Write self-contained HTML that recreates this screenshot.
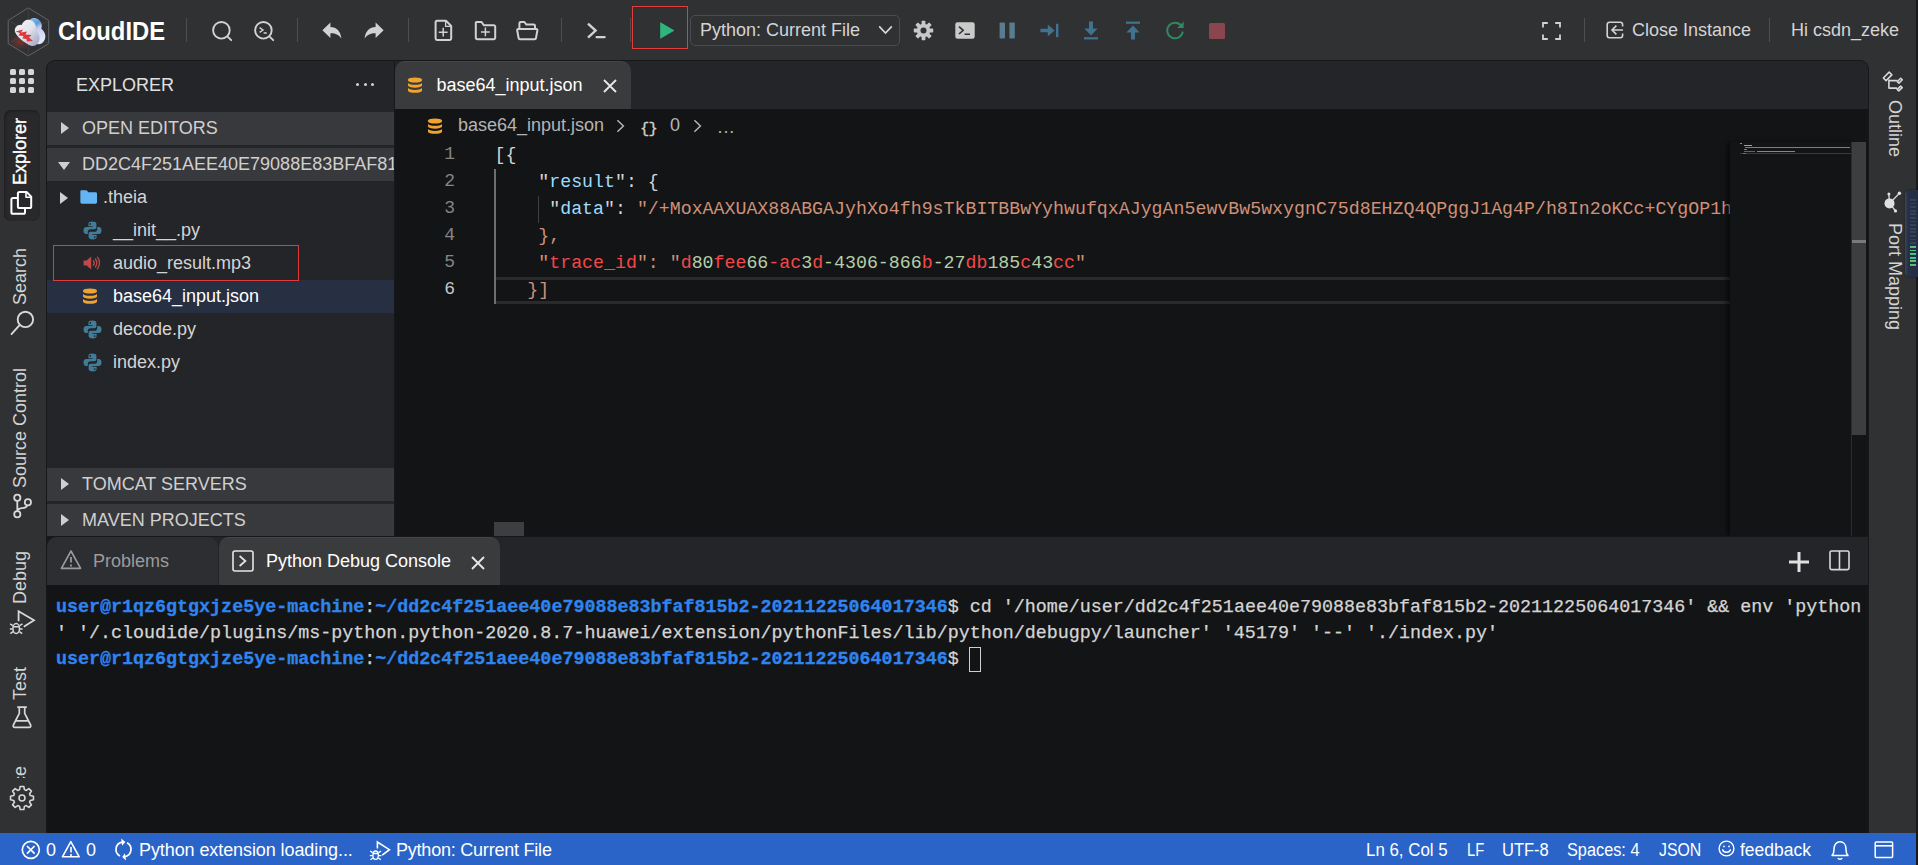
<!DOCTYPE html>
<html lang="en">
<head>
<meta charset="utf-8">
<title>CloudIDE</title>
<style>
*{box-sizing:border-box;margin:0;padding:0}
html,body{width:1918px;height:865px;overflow:hidden;background:#303133;font-family:"Liberation Sans",sans-serif;color:#d4d4d4}
.abs{position:absolute}
#app{position:absolute;left:0;top:0;width:1918px;height:865px;overflow:hidden;background:#303133}
/* top bar */
#top{position:absolute;left:0;top:0;width:1918px;height:60px;background:#303133}
.sep{position:absolute;top:18px;width:1px;height:24px;background:#4d4e51}
.brand{position:absolute;left:58px;top:15px;font-family:"Liberation Sans",sans-serif;font-weight:bold;font-size:26px;line-height:32px;color:#fff;transform:scaleX(0.915);transform-origin:0 0;white-space:nowrap}
.ttext{position:absolute;font-size:18px;line-height:22px;color:#d4d4d4;white-space:nowrap}
svg{position:absolute;overflow:visible}
/* main panel */
#main{position:absolute;left:46px;top:60px;width:1823px;height:773px;background:#242528;border-radius:9px 9px 0 0;border:1px solid #17181a;border-bottom:none;overflow:hidden}
/* everything inside main uses page coordinates via offset wrapper */
#mw{position:absolute;left:-47px;top:-61px;width:1918px;height:865px}
.band{position:absolute;left:47px;width:347px;height:33px;background:#38393c}
.band span{position:absolute;left:35px;top:5px;font-size:18px;line-height:22px;color:#d0d0d0;white-space:nowrap}
.tri-r{position:absolute;width:0;height:0;border-left:8px solid #cfcfcf;border-top:6.2px solid transparent;border-bottom:6.2px solid transparent}
.tri-d{position:absolute;width:0;height:0;border-top:8px solid #cfcfcf;border-left:6.2px solid transparent;border-right:6.2px solid transparent}
.row{position:absolute;left:47px;width:347px;height:33px}
.row span{position:absolute;left:66px;top:5px;font-size:18px;line-height:22px;color:#d4d4d4;white-space:nowrap}
.dot{position:absolute;top:0;width:3.4px;height:3.4px;border-radius:50%;background:#d0d0d0}
.band{overflow:hidden}
.code i{font-style:normal}
.code .k{color:#9cdcfe}
.code .q{color:#d4d4d4}
.code .s{color:#ce9178}
.code .r{color:#f44747}
.code .g{color:#b5cea8}
.gd{position:absolute;width:6px;height:6px;border-radius:1.6px;background:#d6d6d6}
.sx{transform-origin:0 0}
/* status */
#status{position:absolute;left:0;top:833px;width:1916px;height:32px;background:#2a64c8}
.st{position:absolute;top:6px;font-family:"Liberation Sans",sans-serif;font-size:18px;line-height:22px;color:#fff;white-space:nowrap}
.vt{position:absolute;font-size:18px;line-height:22px;color:#d4d4d4;white-space:nowrap;transform-origin:0 0}
.code{position:absolute;left:494.5px;font-family:"Liberation Mono",monospace;font-size:18.25px;line-height:27px;height:27px;white-space:pre;color:#d4d4d4}
.ln{position:absolute;left:395px;width:60px;text-align:right;font-family:"Liberation Mono",monospace;font-size:18px;line-height:27px;color:#858585}
.term{position:absolute;left:56px;font-family:"Liberation Mono",monospace;font-size:18.355px;line-height:26px;white-space:pre;color:#d4d4d4;-webkit-text-stroke:0.25px #d4d4d4}
.term b{color:#2f84ee;-webkit-text-stroke:0.3px #2f84ee}
</style>
</head>
<body>
<div id="app">
<div id="top">

  <!-- logo -->
  <svg style="left:6px;top:6px" width="46" height="52" viewBox="0 0 46 52">
    <defs>
      <linearGradient id="lg1" x1="0" y1="0" x2="1" y2="1"><stop offset="0" stop-color="#f6f6f9"/><stop offset="0.5" stop-color="#e2e2ea"/><stop offset="1" stop-color="#9aa0c4"/></linearGradient>
      <linearGradient id="lg2" x1="0" y1="0" x2="0.6" y2="1"><stop offset="0" stop-color="#b9d8f2"/><stop offset="0.45" stop-color="#5a9bd6"/><stop offset="0.6" stop-color="#c9cdf0"/><stop offset="1" stop-color="#dfe6f6"/></linearGradient>
      <radialGradient id="rg1" cx="0.5" cy="0.5" r="0.5"><stop offset="0" stop-color="#b8352c" stop-opacity="0.5"/><stop offset="1" stop-color="#b8352c" stop-opacity="0"/></radialGradient>
    </defs>
    <path d="M22.3 1.9 L42.7 14.4 L42.7 37.7 L22.3 49.9 L2.2 37.7 L2.2 14.4 Z" fill="none" stroke="#707175" stroke-width="0.8"/>
    <path d="M22.3 1.9 V26 M2.2 14.4 L22.3 26 L42.7 14.4 M2.2 37.7 L22.3 26 L42.7 37.7 M22.3 26 V49.9" fill="none" stroke="#48494d" stroke-width="0.6"/>
    <ellipse cx="14" cy="36" rx="11" ry="8" fill="url(#rg1)"/>
    <path transform="translate(5.8 -1.8)" d="M9 26 C8 21 12 18 16 19 C17 14 23 12 27 15.5 C30 18 30.5 21.5 29.5 24.5 C33.5 27.5 35 33 32 37 C30 40.5 26 40.5 23 39 C18 36 12 32 9 26 Z" fill="url(#lg2)"/>
    <path d="M9 26 C8 21 12 18 16 19 C17 14 23 12 27 15.5 C30 18 30.5 21.5 29.5 24.5 C33.5 27.5 35 33 32 37 C30 40.5 26 40.5 23 39 C18 36 12 32 9 26 Z" fill="url(#lg1)"/>
    <path d="M9.5 25.5 L17 23.5 L15 26.5 L21 25.5 L19.5 28.5 L25.5 29 L23 31.5 L27 35 L21 35.5 L20.5 33 L16.5 32.5 L17.5 30 L12.5 29.5 L14 27 Z" fill="#e0383a"/>
  </svg>
  <div class="brand">CloudIDE</div>
  <div class="sep" style="left:186px"></div>
  <!-- search -->
  <svg style="left:210px;top:19px" width="24" height="24" viewBox="0 0 24 24" fill="none" stroke="#d2d2d2" stroke-width="1.9" stroke-linecap="round"><circle cx="11.4" cy="11.3" r="8.3"/><path d="M17.6 17.6 L21.2 21.2"/></svg>
  <!-- search terminal -->
  <svg style="left:252px;top:19px" width="24" height="24" viewBox="0 0 24 24" fill="none" stroke="#d2d2d2" stroke-width="1.9" stroke-linecap="round"><circle cx="11.4" cy="11.3" r="8.3"/><path d="M17.6 17.6 L21.2 21.2"/><path d="M7.6 8.6 L11 11 L7.6 13.4 M11.6 14 L14.8 14" stroke-width="1.4" stroke-linecap="butt"/></svg>
  <div class="sep" style="left:297px"></div>
  <!-- undo -->
  <svg style="left:322px;top:22px" width="20" height="17" viewBox="0 0 20 17"><path d="M0.4 8.2 L8.4 0.4 L8.4 5 C14.5 5.2 18.6 9 19.4 16.6 C16.6 12.6 13.4 11.2 8.4 11.3 L8.4 16 Z" fill="#d2d2d2"/></svg>
  <!-- redo -->
  <svg style="left:364px;top:22px" width="20" height="17" viewBox="0 0 20 17"><path d="M19.6 8.2 L11.6 0.4 L11.6 5 C5.5 5.2 1.4 9 0.6 16.6 C3.4 12.6 6.6 11.2 11.6 11.3 L11.6 16 Z" fill="#d2d2d2"/></svg>
  <div class="sep" style="left:408px"></div>
  <!-- new file -->
  <svg style="left:434px;top:19px" width="19" height="23" viewBox="0 0 19 23" fill="none" stroke="#d2d2d2" stroke-width="2" stroke-linejoin="round" stroke-linecap="round"><path d="M3 1.8 H12 L17.2 7 V19.6 A1.4 1.4 0 0 1 15.8 21 H3 A1.4 1.4 0 0 1 1.6 19.6 V3.2 A1.4 1.4 0 0 1 3 1.8 Z"/><path d="M11.6 2.2 V7.4 H16.8" stroke-width="1.3"/><path d="M9.2 8.8 V17.6 M4.8 13.2 H13.6" stroke-width="1.5" stroke-linecap="butt"/></svg>
  <!-- new folder -->
  <svg style="left:474px;top:20px" width="23" height="21" viewBox="0 0 23 21" fill="none" stroke="#d2d2d2" stroke-width="2" stroke-linejoin="round"><path d="M2.4 2 H7.6 L9.8 5.2 H19.8 A1.4 1.4 0 0 1 21.2 6.6 V17.8 A1.4 1.4 0 0 1 19.8 19.2 H3.2 A1.4 1.4 0 0 1 1.8 17.8 V2.6 Z"/><path d="M11.4 7.6 V16.2 M7 12 H15.8" stroke-width="1.5"/></svg>
  <!-- open folder -->
  <svg style="left:516px;top:20px" width="23" height="21" viewBox="0 0 23 21" fill="none" stroke="#d2d2d2" stroke-width="2" stroke-linejoin="round"><path d="M3.4 9 V3.4 A1.4 1.4 0 0 1 4.8 2 H8.4 L10.4 4.6 H17.6 A1.4 1.4 0 0 1 19 6 V9"/><path d="M2.2 9 H20.4 A1 1 0 0 1 21.4 10.2 L20 18 A1.4 1.4 0 0 1 18.6 19.2 H4 A1.4 1.4 0 0 1 2.6 18 L1.2 10.2 A1 1 0 0 1 2.2 9 Z"/></svg>
  <div class="sep" style="left:561px"></div>
  <!-- terminal prompt -->
  <svg style="left:586px;top:22px" width="21" height="18" viewBox="0 0 21 18" fill="none" stroke="#d2d2d2" stroke-width="2.4"><path d="M2 1.6 L9.6 8.6 L2 15.6"/><path d="M10.6 15.2 H18.6" stroke-linecap="round" stroke-width="2.2"/></svg>
  <div class="sep" style="left:630px;width:1px"></div>
  <!-- run box -->
  <div class="abs" style="left:632px;top:6px;width:56px;height:43px;border:1.5px solid #e23b3b"></div>
  <svg style="left:659px;top:22px" width="16" height="17" viewBox="0 0 16 17"><path d="M1.6 0.8 L14.8 8.5 L1.6 16.2 Z" fill="#2eb67d" stroke="#2eb67d" stroke-width="0.8" stroke-linejoin="round"/></svg>
  <!-- select -->
  <div class="abs" style="left:690px;top:15px;width:210px;height:31px;border:1px solid #4b4c50;border-radius:5px"></div>
  <div class="ttext" style="left:700px;top:19px">Python: Current File</div>
  <svg style="left:878px;top:25px" width="15" height="10" viewBox="0 0 15 10" fill="none" stroke="#d8d8d8" stroke-width="1.7"><path d="M1.2 1.4 L7.5 8 L13.8 1.4"/></svg>
  <!-- gear -->
  <svg style="left:913px;top:20px" width="21" height="21" viewBox="0 0 21 21"><g fill="#c8c8c8"><circle cx="10.5" cy="10.5" r="6.7"/><g id="tth"><rect x="8.6" y="0.8" width="3.8" height="4.4" rx="0.6"/><rect x="8.6" y="15.8" width="3.8" height="4.4" rx="0.6"/></g><use href="#tth" transform="rotate(45 10.5 10.5)"/><use href="#tth" transform="rotate(90 10.5 10.5)"/><use href="#tth" transform="rotate(135 10.5 10.5)"/></g><circle cx="10.5" cy="10.5" r="3" fill="#303133"/></svg>
  <!-- debug console -->
  <svg style="left:955px;top:22px" width="20" height="17" viewBox="0 0 20 17"><rect x="0.3" y="0.3" width="19.4" height="16.4" rx="2.2" fill="#cacaca"/><path d="M4 4.6 L8.2 8.3 L4 12 M9.6 12.2 H15" fill="none" stroke="#303133" stroke-width="1.6"/></svg>
  <!-- pause -->
  <svg style="left:999px;top:22px" width="17" height="17" viewBox="0 0 17 17"><rect x="0.6" y="0.4" width="5.4" height="16.2" rx="0.8" fill="#5b7b8e"/><rect x="10.4" y="0.4" width="5.4" height="16.2" rx="0.8" fill="#5b7b8e"/></svg>
  <!-- step over -->
  <svg style="left:1040px;top:22px" width="19" height="17" viewBox="0 0 19 17"><path d="M0.4 6.8 H7.8 V2.4 L14.6 8.5 L7.8 14.6 V10.2 H0.4 Z" fill="#417290"/><rect x="16" y="1.8" width="2.4" height="13.4" fill="#417290"/></svg>
  <!-- step into -->
  <svg style="left:1083px;top:21px" width="16" height="19" viewBox="0 0 16 19"><path d="M6 0.6 H10 V7.4 H14.6 L8 14.4 L1.4 7.4 H6 Z" fill="#417290"/><rect x="1" y="16.2" width="14" height="2.2" fill="#417290"/></svg>
  <!-- step out -->
  <svg style="left:1125px;top:21px" width="16" height="19" viewBox="0 0 16 19"><rect x="1" y="0.6" width="14" height="2.2" fill="#417290"/><path d="M6 18.4 H10 V11.6 H14.6 L8 4.6 L1.4 11.6 H6 Z" fill="#417290"/></svg>
  <!-- restart -->
  <svg style="left:1165px;top:20px" width="20" height="20" viewBox="0 0 20 20" fill="none"><path d="M16.6 6.2 A7.8 7.8 0 1 0 17.8 11.6" stroke="#2f8a63" stroke-width="1.9"/><path d="M18.6 1.6 V8 H12.2 Z" fill="#2f8a63"/></svg>
  <!-- stop -->
  <div class="abs" style="left:1209px;top:22.5px;width:16px;height:16.5px;background:#89464f;border-radius:1.5px"></div>
  <!-- fullscreen -->
  <svg style="left:1542px;top:22px" width="19" height="18" viewBox="0 0 19 18" fill="none" stroke="#d2d2d2" stroke-width="1.8"><path d="M1 5.6 V1 H5.8 M13.2 1 H18 V5.6 M18 12.4 V17 H13.2 M5.8 17 H1 V12.4"/></svg>
  <div class="sep" style="left:1584px"></div>
  <!-- close instance icon -->
  <svg style="left:1606px;top:21px" width="18" height="18" viewBox="0 0 18 18" fill="none" stroke="#d2d2d2" stroke-width="1.6"><path d="M16.6 5.4 V3.4 A2.2 2.2 0 0 0 14.4 1.2 H3.4 A2.2 2.2 0 0 0 1.2 3.4 V14.6 A2.2 2.2 0 0 0 3.4 16.8 H14.4 A2.2 2.2 0 0 0 16.6 14.6 V12.6"/><path d="M17 9 H6.4 M10.4 4.6 L6 9 L10.4 13.4" stroke-linejoin="miter"/></svg>
  <div class="ttext" style="left:1632px;top:19px">Close Instance</div>
  <div class="sep" style="left:1769px"></div>
  <div class="ttext" style="left:1791px;top:19px">Hi csdn_zeke</div>
</div>
<div id="main"><div id="mw">


  <!-- editor -->
  <div class="abs" style="left:394px;top:61px;width:1px;height:476px;background:#17181a"></div>
  <div class="abs" style="left:395px;top:109px;width:1474px;height:428px;background:#131416"></div>
  <div class="abs" style="left:395px;top:61px;width:236px;height:48px;background:#3a3b3d;border-top:1px solid #444547;border-radius:10px 10px 0 0"></div>
  <svg style="left:407px;top:77px" width="16" height="17" viewBox="0 0 16 17"><g fill="#f0a32e"><path d="M1 2.6 A7 2.1 0 0 1 15 2.6 V3.4 A7 2.1 0 0 1 1 3.4 Z"/><path d="M1 5.7 A7 2.1 0 0 0 15 5.7 V8.6 A7 2.1 0 0 1 1 8.6 Z"/><path d="M1 10.8 A7 2.1 0 0 0 15 10.8 V13.7 A7 2.1 0 0 1 1 13.7 Z"/></g></svg>
  <div class="abs" style="left:436.5px;top:74px;font-size:18px;line-height:22px;color:#fff">base64_input.json</div>
  <svg style="left:603px;top:79px" width="14" height="14" viewBox="0 0 14 14" fill="none" stroke="#e6e6e6" stroke-width="1.9"><path d="M1 1 L13 13 M13 1 L1 13"/></svg>
  <!-- breadcrumbs -->
  <svg style="left:427px;top:118px" width="16" height="17" viewBox="0 0 16 17"><g fill="#f0a32e"><path d="M1 2.6 A7 2.1 0 0 1 15 2.6 V3.4 A7 2.1 0 0 1 1 3.4 Z"/><path d="M1 5.7 A7 2.1 0 0 0 15 5.7 V8.6 A7 2.1 0 0 1 1 8.6 Z"/><path d="M1 10.8 A7 2.1 0 0 0 15 10.8 V13.7 A7 2.1 0 0 1 1 13.7 Z"/></g></svg>
  <div class="abs" style="left:458px;top:114px;font-size:18px;line-height:22px;color:#b4b4b4;white-space:pre">base64_input.json</div>
  <svg style="left:616px;top:119px" width="9" height="14" viewBox="0 0 9 14" fill="none" stroke="#b4b4b4" stroke-width="1.5"><path d="M1.4 1.2 L7.4 7 L1.4 12.8"/></svg>
  <div class="abs" style="left:640px;top:118px;font-family:'Liberation Mono',monospace;font-size:15.5px;line-height:22px;color:#d0d0d0;letter-spacing:-0.8px;-webkit-text-stroke:0.35px #d0d0d0">{}</div>
  <div class="abs" style="left:670px;top:114px;font-size:18px;line-height:22px;color:#b4b4b4">0</div>
  <svg style="left:693px;top:119px" width="9" height="14" viewBox="0 0 9 14" fill="none" stroke="#b4b4b4" stroke-width="1.5"><path d="M1.4 1.2 L7.4 7 L1.4 12.8"/></svg>
  <div class="abs" style="left:717.5px;top:116px;font-size:18px;line-height:22px;color:#b4b4b4;letter-spacing:0.9px">...</div>
  <!-- code -->
  <div class="ln" style="top:141px">1</div><div class="ln" style="top:168px">2</div><div class="ln" style="top:195px">3</div><div class="ln" style="top:222px">4</div><div class="ln" style="top:249px">5</div><div class="ln" style="top:276px;color:#c6c6c6">6</div>
  <div class="abs" style="left:494px;top:169px;width:2px;height:135px;background:#6e6e6e"></div>
  <div class="abs" style="left:538px;top:196px;width:1px;height:27px;background:#404040"></div>
  <div class="abs" style="left:496px;top:277px;width:1234px;height:3px;background:#2a2a2c"></div>
  <div class="abs" style="left:496px;top:301px;width:1234px;height:3px;background:#2a2a2c"></div>
  <div class="code" style="top:142px">[{</div>
  <div class="code" style="top:169px">    <i class="q">"</i><i class="k">result</i><i class="q">"</i>: {</div>
  <div class="code" style="top:196px;width:1235px;overflow:hidden">     <i class="q">"</i><i class="k">data</i><i class="q">"</i>: <i class="s">"/+MoxAAXUAX88ABGAJyhXo4fh9sTkBITBBwYyhwufqxAJygAn5ewvBw5wxygnC75d8EHZQ4QPggJ1Ag4P/h8In2oKCc+CYgOP1hT8vwA5gQZjNgTJaDHAjcHAgP9uYAwYGAT4GHAACAF9zPw5eY</i></div>
  <div class="code" style="top:223px">    <i class="s">},</i></div>
  <div class="code" style="top:250px">    <i class="s">"</i><i class="r">trace_id</i><i class="s">": "</i><i class="r">d<i class="g">80</i>fee<i class="g">66</i>-ac<i class="g">3</i>d<i class="g">-4306-866</i>b<i class="g">-27</i>db<i class="g">185</i>c<i class="g">43</i>cc</i><i class="s">"</i></div>
  <div class="code" style="top:277px">   <i class="s">}]</i></div>
  <!-- minimap -->
  <div class="abs" style="left:1730px;top:142px;width:121px;height:395px;background:#131416;box-shadow:-4px 0 5px -1px rgba(0,0,0,0.55)"></div>
  <div class="abs" style="left:1740px;top:143px;width:2px;height:1px;background:#8a8a8a"></div>
  <div class="abs" style="left:1744px;top:145px;width:8px;height:1px;background:#7fa9c0"></div>
  <div class="abs" style="left:1745px;top:147px;width:105px;height:1.2px;background:#a8705a"></div>
  <div class="abs" style="left:1744px;top:149px;width:3px;height:1px;background:#a8705a"></div>
  <div class="abs" style="left:1744px;top:151px;width:11px;height:1px;background:#c03d3d"></div>
  <div class="abs" style="left:1757px;top:151px;width:38px;height:1px;background:#a37f6a"></div>
  <div class="abs" style="left:1740px;top:153px;width:111px;height:1px;background:#24405f"></div>
  <div class="abs" style="left:1743px;top:153px;width:3px;height:1px;background:#8a6a5a"></div>
  <!-- scrollbars -->
  <div class="abs" style="left:1851px;top:142px;width:1px;height:395px;background:#2b2c2e"></div>
  <div class="abs" style="left:1852px;top:142px;width:14px;height:293px;background:#3d3e40"></div>
  <div class="abs" style="left:1852px;top:240px;width:14px;height:3px;background:#7a7a7a"></div>
  <div class="abs" style="left:494px;top:522px;width:30px;height:14px;background:#3d3e40"></div>

  <!-- bottom panel -->
  <div class="abs" style="left:47px;top:536px;width:1822px;height:10px;background:#17181a"></div>
  <div class="abs" style="left:47px;top:537px;width:1822px;height:48px;background:#242528;border-radius:9px 0 0 0"></div>
  <div class="abs" style="left:47px;top:537px;width:171px;height:48px;background:#2d2e31;border-radius:10px 10px 0 0"></div>
  <div class="abs" style="left:47px;top:585px;width:1822px;height:248px;background:#131416"></div>
  <svg style="left:60px;top:549px" width="22" height="21" viewBox="0 0 22 21" fill="none" stroke="#9b9b9b" stroke-width="1.6" stroke-linejoin="round"><path d="M11 2 L20.6 19.4 H1.4 Z"/><path d="M11 8 V13.6 M11 15.4 V17.4" stroke-width="1.8"/></svg>
  <div class="abs" style="left:93px;top:550px;font-size:18px;line-height:22px;color:#9b9b9b">Problems</div>
  <div class="abs" style="left:219px;top:537px;width:281px;height:48px;background:#3a3b3d;border-top:1px solid #444547;border-radius:10px 10px 0 0"></div>
  <svg style="left:232px;top:550px" width="22" height="22" viewBox="0 0 22 22" fill="none" stroke="#e6e6e6" stroke-width="1.6"><rect x="1" y="1" width="20" height="20" rx="2"/><path d="M7.6 6 L13.4 11 L7.6 16" stroke-width="1.7"/></svg>
  <div class="abs" style="left:266px;top:550px;font-size:18px;line-height:22px;color:#fff">Python Debug Console</div>
  <svg style="left:471px;top:556px" width="14" height="14" viewBox="0 0 14 14" fill="none" stroke="#e6e6e6" stroke-width="1.9"><path d="M1 1 L13 13 M13 1 L1 13"/></svg>
  <svg style="left:1788px;top:551px" width="22" height="22" viewBox="0 0 22 22" fill="none" stroke="#e0e0e0" stroke-width="3"><path d="M11 1 V21 M1 11 H21"/></svg>
  <svg style="left:1829px;top:550px" width="21" height="21" viewBox="0 0 21 21" fill="none" stroke="#d8d8d8" stroke-width="1.6"><rect x="1" y="1" width="19" height="18.6" rx="1.6"/><path d="M10.5 1 V19.6"/></svg>
  <div class="term" style="top:595px"><b>user@r1qz6gtgxjze5ye-machine</b>:<b>~/dd2c4f251aee40e79088e83bfaf815b2-20211225064017346</b>$ cd '/home/user/dd2c4f251aee40e79088e83bfaf815b2-20211225064017346' &amp;&amp; env 'python</div>
  <div class="term" style="top:621px">' '/.cloudide/plugins/ms-python.python-2020.8.7-huawei/extension/pythonFiles/lib/python/debugpy/launcher' '45179' '--' './index.py'</div>
  <div class="term" style="top:647px"><b>user@r1qz6gtgxjze5ye-machine</b>:<b>~/dd2c4f251aee40e79088e83bfaf815b2-20211225064017346</b>$ </div>
  <div class="abs" style="left:969px;top:647px;width:12px;height:25px;border:1.5px solid #cfcfcf"></div>
  <!-- sidebar -->
  <div class="abs" style="left:76px;top:74px;font-size:18px;line-height:22px;color:#e0e0e0">EXPLORER</div>
  <div class="abs" style="left:355px;top:83px;width:20px;height:4px"><i class="dot" style="left:1px"></i><i class="dot" style="left:8.5px"></i><i class="dot" style="left:16px"></i></div>
  <div class="band" style="top:112px"><div class="tri-r" style="left:14px;top:10.4px"></div><span>OPEN EDITORS</span></div>
  <div class="band" style="top:148px"><div class="tri-d" style="left:11px;top:13.6px"></div><span>DD2C4F251AEE40E79088E83BFAF815B2</span></div>
  <div class="row" style="top:181px"><div class="tri-r" style="left:13px;top:10.6px"></div>
    <svg style="left:33px;top:9px" width="17.4" height="14" viewBox="0 0 19 16" preserveAspectRatio="none"><path d="M1.6 0.4 H6.6 C7.2 0.4 7.6 0.6 8 1.2 L9 2.6 H17 C17.9 2.6 18.6 3.3 18.6 4.2 V14 C18.6 14.9 17.9 15.6 17 15.6 H2 C1.1 15.6 0.4 14.9 0.4 14 V1.6 C0.4 0.9 0.9 0.4 1.6 0.4 Z" fill="#64b5f6"/></svg>
    <span style="left:56px">.theia</span></div>
  <div class="row" style="top:214px"><svg style="left:36px;top:7px" width="19" height="19" viewBox="0 0 19 19"><g fill="#3f7d9b"><path d="M9.3 0.6 C6.6 0.6 5.4 1.4 5.4 3 V5.2 H9.6 V6 H3.2 C1.4 6 0.5 7.4 0.5 9.5 C0.5 11.6 1.4 13 3.2 13 H4.8 V10.8 C4.8 9.2 6 8.2 7.6 8.2 H11.4 C12.6 8.2 13.4 7.4 13.4 6.2 V3 C13.4 1.4 11.8 0.6 9.3 0.6 Z"/><path d="M9.7 18.4 C12.4 18.4 13.6 17.6 13.6 16 V13.8 H9.4 V13 H15.8 C17.6 13 18.5 11.6 18.5 9.5 C18.5 7.4 17.6 6 15.8 6 H14.2 V8.2 C14.2 9.8 13 10.8 11.4 10.8 H7.6 C6.4 10.8 5.6 11.6 5.6 12.8 V16 C5.6 17.6 7.2 18.4 9.7 18.4 Z"/></g><circle cx="7.3" cy="2.9" r="0.85" fill="#242528"/><circle cx="11.7" cy="16.1" r="0.85" fill="#242528"/></svg><span>__init__.py</span></div>
  <div class="row" style="top:247px">
    <svg style="left:36px;top:8px" width="18" height="16" viewBox="0 0 18 16"><path d="M0.6 5.4 H3.6 L8.2 1.6 V14.4 L3.6 10.6 H0.6 Z" fill="#c0484a"/><g fill="none" stroke="#c0484a" stroke-width="1.3" stroke-linecap="round"><path d="M10.4 5.8 C11.4 7 11.4 9 10.4 10.2"/><path d="M12.4 4 C14.2 6.2 14.2 9.8 12.4 12"/><path d="M14.4 2.2 C17.2 5.6 17.2 10.4 14.4 13.8"/></g></svg>
    <span>audio_result.mp3</span></div>
  <div class="row" style="top:280px;background:#272f42"><svg style="left:35px;top:8px" width="16" height="17" viewBox="0 0 16 17"><g fill="#f0a32e"><path d="M1 2.6 A7 2.1 0 0 1 15 2.6 V3.4 A7 2.1 0 0 1 1 3.4 Z"/><path d="M1 5.7 A7 2.1 0 0 0 15 5.7 V8.6 A7 2.1 0 0 1 1 8.6 Z"/><path d="M1 10.8 A7 2.1 0 0 0 15 10.8 V13.7 A7 2.1 0 0 1 1 13.7 Z"/></g></svg><span style="color:#fff">base64_input.json</span></div>
  <div class="row" style="top:313px"><svg style="left:36px;top:7px" width="19" height="19" viewBox="0 0 19 19"><g fill="#3f7d9b"><path d="M9.3 0.6 C6.6 0.6 5.4 1.4 5.4 3 V5.2 H9.6 V6 H3.2 C1.4 6 0.5 7.4 0.5 9.5 C0.5 11.6 1.4 13 3.2 13 H4.8 V10.8 C4.8 9.2 6 8.2 7.6 8.2 H11.4 C12.6 8.2 13.4 7.4 13.4 6.2 V3 C13.4 1.4 11.8 0.6 9.3 0.6 Z"/><path d="M9.7 18.4 C12.4 18.4 13.6 17.6 13.6 16 V13.8 H9.4 V13 H15.8 C17.6 13 18.5 11.6 18.5 9.5 C18.5 7.4 17.6 6 15.8 6 H14.2 V8.2 C14.2 9.8 13 10.8 11.4 10.8 H7.6 C6.4 10.8 5.6 11.6 5.6 12.8 V16 C5.6 17.6 7.2 18.4 9.7 18.4 Z"/></g><circle cx="7.3" cy="2.9" r="0.85" fill="#242528"/><circle cx="11.7" cy="16.1" r="0.85" fill="#242528"/></svg><span>decode.py</span></div>
  <div class="row" style="top:346px"><svg style="left:36px;top:7px" width="19" height="19" viewBox="0 0 19 19"><g fill="#3f7d9b"><path d="M9.3 0.6 C6.6 0.6 5.4 1.4 5.4 3 V5.2 H9.6 V6 H3.2 C1.4 6 0.5 7.4 0.5 9.5 C0.5 11.6 1.4 13 3.2 13 H4.8 V10.8 C4.8 9.2 6 8.2 7.6 8.2 H11.4 C12.6 8.2 13.4 7.4 13.4 6.2 V3 C13.4 1.4 11.8 0.6 9.3 0.6 Z"/><path d="M9.7 18.4 C12.4 18.4 13.6 17.6 13.6 16 V13.8 H9.4 V13 H15.8 C17.6 13 18.5 11.6 18.5 9.5 C18.5 7.4 17.6 6 15.8 6 H14.2 V8.2 C14.2 9.8 13 10.8 11.4 10.8 H7.6 C6.4 10.8 5.6 11.6 5.6 12.8 V16 C5.6 17.6 7.2 18.4 9.7 18.4 Z"/></g><circle cx="7.3" cy="2.9" r="0.85" fill="#242528"/><circle cx="11.7" cy="16.1" r="0.85" fill="#242528"/></svg><span>index.py</span></div>
  <div class="abs" style="left:53px;top:245px;width:246px;height:36px;border:1.5px solid #e23b3b"></div>
  <div class="band" style="top:468px"><div class="tri-r" style="left:14px;top:10.4px"></div><span>TOMCAT SERVERS</span></div>
  <div class="band" style="top:504px;height:32px"><div class="tri-r" style="left:14px;top:10.4px"></div><span>MAVEN PROJECTS</span></div>
</div></div>

<!-- activity bar -->
<div id="act">
  <div class="abs" style="left:10px;top:69px;width:28px;height:27px">
    <i class="gd" style="left:0px;top:0px"></i><i class="gd" style="left:9px;top:0px"></i><i class="gd" style="left:18px;top:0px"></i>
    <i class="gd" style="left:0px;top:9px"></i><i class="gd" style="left:9px;top:9px"></i><i class="gd" style="left:18px;top:9px"></i>
    <i class="gd" style="left:0px;top:18px"></i><i class="gd" style="left:9px;top:18px"></i><i class="gd" style="left:18px;top:18px"></i>
  </div>
  <div class="abs" style="left:4px;top:110px;width:36px;height:111px;background:#29292b;border-radius:7px;box-shadow:inset 1px 1px 3px rgba(0,0,0,0.35)"></div>
  <div class="vt" style="left:9px;top:184.5px;transform:rotate(-90deg);color:#fff;-webkit-text-stroke:0.4px #fff">Explorer</div>
  <svg style="left:6px;top:186px" width="32" height="32" viewBox="6 186 32 32" fill="none" stroke="#fff" stroke-width="2" stroke-linejoin="round"><path d="M17 197.9 H13 A1.6 1.6 0 0 0 11.4 199.5 V212.2 A1.6 1.6 0 0 0 13 213.8 H23.4 A1.6 1.6 0 0 0 25 212.2 V209"/><path d="M19.5 192 H26.6 L31.2 196.6 V206.4 A1.6 1.6 0 0 1 29.6 208 H19.5 A1.6 1.6 0 0 1 17.9 206.4 V193.6 A1.6 1.6 0 0 1 19.5 192 Z"/><path d="M26 192.6 V197.2 H30.6" stroke-width="1.6"/></svg>
  <div class="vt" style="left:9px;top:305px;transform:rotate(-90deg)">Search</div>
  <svg style="left:9px;top:311px" width="25" height="25" viewBox="0 0 25 25" fill="none" stroke="#d8d8d8" stroke-width="1.9" stroke-linecap="round"><circle cx="16.4" cy="8.4" r="7.7"/><path d="M10.8 13.9 L2.5 23.1"/></svg>
  <div class="vt" style="left:9px;top:488px;transform:rotate(-90deg)">Source Control</div>
  <svg style="left:6px;top:490px" width="32" height="32" viewBox="6 490 32 32" fill="none" stroke="#d8d8d8" stroke-width="1.8"><circle cx="17.3" cy="497.7" r="3.1"/><circle cx="17.3" cy="514.2" r="3.1"/><circle cx="27.9" cy="502.2" r="3.1"/><path d="M17.3 500.8 V511.1 M27.2 505.3 C26.6 508 24.2 508 21.6 508.2 C19.4 508.4 18 509.2 17.4 510.8"/></svg>
  <div class="vt" style="left:9px;top:604px;transform:rotate(-90deg)">Debug</div>
  <svg style="left:6px;top:606px" width="32" height="32" viewBox="6 606 32 32" fill="none" stroke="#d8d8d8" stroke-width="1.8" stroke-linejoin="miter"><path d="M18.6 621.2 V611.3 L34 620.2 L23.8 626.8"/><g stroke-width="1.5"><ellipse cx="16.2" cy="628.6" rx="3.3" ry="5"/><path d="M13 626.7 H19.4 M12.8 625.6 L10.2 623.8 M19.6 625.6 L22.4 623.8 M12.6 628.9 H9.8 M19.8 628.9 H22.6 M13 631.6 L10.4 633.6 M19.4 631.6 L22.2 633.6"/></g></svg>
  <div class="vt" style="left:9px;top:700px;transform:rotate(-90deg)">Test</div>
  <svg style="left:10px;top:705px" width="24" height="24" viewBox="0 0 24 24" fill="none" stroke="#d8d8d8" stroke-width="1.7" stroke-linejoin="round"><path d="M7.2 2.1 H16.8 M9.3 2.1 V8.4 L3.4 20 C2.8 21.4 3.6 22.3 4.8 22.3 H19.2 C20.4 22.3 21.2 21.4 20.6 20 L14.7 8.4 V2.1 M6.2 15.9 H17.8"/></svg>
  <div class="abs" style="left:0;top:760px;width:46px;height:17.6px;overflow:hidden"><div class="vt" style="left:9px;top:94px;transform:rotate(-90deg)">Preference</div></div>
  <svg style="left:10px;top:786px" width="24" height="24" viewBox="0 0 26 26" fill="none" stroke="#d8d8d8" stroke-width="1.7" stroke-linejoin="round"><path d="M11 1.2 H15 L15.6 4.6 L17.6 5.5 L20.4 3.5 L23.2 6.3 L21.2 9.1 L22 11.1 L25.4 11.7 V15.7 L22 16.3 L21.2 18.3 L23.2 21.1 L20.4 23.9 L17.6 21.9 L15.6 22.8 L15 26.2 H11 L10.4 22.8 L8.4 21.9 L5.6 23.9 L2.8 21.1 L4.8 18.3 L4 16.3 L0.6 15.7 V11.7 L4 11.1 L4.8 9.1 L2.8 6.3 L5.6 3.5 L8.4 5.5 L10.4 4.6 Z" transform="translate(0 -0.7)"/><circle cx="13" cy="13" r="3.2"/></svg>
</div>
<!-- right bar -->
<div id="rbar">
  <svg style="left:1870px;top:62px" width="48" height="48" viewBox="0 0 48 48" fill="none" stroke="#d8d8d8" stroke-width="1.6" stroke-linejoin="round"><rect x="-4.1" y="-1.9" width="8.2" height="3.8" transform="translate(17.6 14.4) rotate(-45)"/><rect x="-2.4" y="-1.1" width="4.8" height="2.2" transform="translate(29.8 18.7) rotate(-45)"/><rect x="-2.4" y="-1.1" width="4.8" height="2.2" transform="translate(29.7 26.5) rotate(-45)"/><path d="M18.9 17.4 V26.1 H27 M18.9 18.6 H27.4"/></svg>
  <div class="vt" style="left:1906px;top:100px;transform:rotate(90deg)">Outline</div>
  <svg style="left:1862px;top:170px" width="56" height="56" viewBox="0 0 56 56" fill="none" stroke="#e0e0e0" stroke-width="1.3"><circle cx="27.5" cy="33.4" r="5" fill="#e0e0e0" stroke="none"/><path d="M27.3 33 L26.9 24.4 M29 32 L37.3 23.4 M29 35 L33.4 40.8"/><circle cx="26.9" cy="24" r="1.5" fill="#e0e0e0" stroke="none"/><circle cx="37.4" cy="23.2" r="1.7" fill="#e0e0e0" stroke="none"/><circle cx="33.5" cy="40.9" r="1.6" fill="#e0e0e0" stroke="none"/></svg>
  <div class="vt" style="left:1906px;top:223px;transform:rotate(90deg)">Port Mapping</div>
  <div class="abs" style="left:1916px;top:0;width:2px;height:865px;background:#18191b"></div>
  <!-- perf widget -->
  <div class="abs" style="left:1905px;top:189.5px;width:20px;height:87px;background:linear-gradient(to right,#3a4763 0,#262f44 3px,#232c40 100%);border-radius:5px;box-shadow:0 0 2px rgba(0,0,0,0.5)"></div>
  <div class="abs" style="left:1909.5px;top:198.6px;width:6px;height:46px;background:repeating-linear-gradient(to bottom,#35425c 0,#35425c 1.8px,transparent 1.8px,transparent 3.6px)"></div>
  <div class="abs" style="left:1909.5px;top:246.4px;width:6px;height:21.6px;background:repeating-linear-gradient(to bottom,#6fc07a 0,#2fc08a 1.9px,transparent 1.9px,transparent 3.6px)"></div>
</div>
<div id="status">
  <svg style="left:21px;top:6.5px" width="20" height="20" viewBox="0 0 20 20" fill="none" stroke="#fff" stroke-width="1.7"><circle cx="9.8" cy="9.8" r="8.5"/><path d="M6 6 L13.6 13.6 M13.6 6 L6 13.6"/></svg>
  <div class="st" style="left:46px">0</div>
  <svg style="left:61px;top:6.5px" width="20" height="19" viewBox="0 0 20 19" fill="none" stroke="#fff" stroke-width="1.6" stroke-linejoin="round"><path d="M9.8 1.6 L18.2 16.8 H1.4 Z"/><path d="M10 7 V12.4 M10 14 V16" stroke-width="1.6"/></svg>
  <div class="st" style="left:86px">0</div>
  <svg style="left:113px;top:5px" width="22" height="23" viewBox="113 838 22 23" fill="none" stroke="#fff" stroke-width="1.7"><path d="M119.98 856.02 A7.5 7.5 0 0 1 121.94 842.06 M127.02 842.78 A7.5 7.5 0 0 1 125.06 856.74"/><path d="M121.2 838.5 L125.4 842 L122 845.8 Z M122.2 857 L125 853.2 L126 860.4 Z" fill="#fff" stroke="none"/></svg>
  <div class="st" style="left:139px;letter-spacing:-0.09px">Python extension loading...</div>
  <svg style="left:366px;top:5px" width="26" height="26" viewBox="366 838 26 26" fill="none" stroke="#fff" stroke-width="1.6" stroke-linejoin="miter"><path d="M377.4 848.4 V842 L389.4 849.7 L382.2 855.2"/><g stroke-width="1.3"><ellipse cx="375.6" cy="855.2" rx="2.7" ry="4.2"/><path d="M372.9 853.5 H378.3 M372.6 852.6 L370.2 851 M378.6 852.6 L381 851 M372.6 855.6 H369.8 M378.6 855.6 H381.4 M372.9 858 L370.4 859.8 M378.3 858 L380.8 859.8"/></g></svg>
  <div class="st" style="left:396px;letter-spacing:-0.22px">Python: Current File</div>
  <div class="st sx" style="left:1366px;transform:scaleX(0.938)">Ln 6, Col 5</div>
  <div class="st sx" style="left:1467px;transform:scaleX(0.82)">LF</div>
  <div class="st sx" style="left:1502px;transform:scaleX(0.916)">UTF-8</div>
  <div class="st sx" style="left:1567px;transform:scaleX(0.905)">Spaces: 4</div>
  <div class="st sx" style="left:1658.5px;transform:scaleX(0.88)">JSON</div>
  <svg style="left:1718px;top:7px" width="17" height="17" viewBox="0 0 17 17" fill="none" stroke="#fff" stroke-width="1.4"><circle cx="8.5" cy="8.5" r="7.4"/><path d="M4.6 9.8 C5.6 13 11.4 13 12.4 9.8" stroke-linecap="round"/><circle cx="6" cy="6.4" r="0.9" fill="#fff" stroke="none"/><circle cx="11" cy="6.4" r="0.9" fill="#fff" stroke="none"/></svg>
  <div class="st sx" style="left:1739.5px;transform:scaleX(0.972)">feedback</div>
  <svg style="left:1830px;top:7px" width="20" height="21" viewBox="0 0 20 21" fill="none" stroke="#fff" stroke-width="1.5" stroke-linejoin="round"><path d="M2 15.6 C4 13.6 4 12 4 9 C4 4.6 6.6 1.8 10 1.8 C13.4 1.8 16 4.6 16 9 C16 12 16 13.6 18 15.6 Z"/><path d="M8 18 C8.4 19.6 11.6 19.6 12 18"/></svg>
  <svg style="left:1873.5px;top:8px" width="20" height="18" viewBox="0 0 20 18" fill="none" stroke="#fff" stroke-width="1.5"><rect x="1.2" y="1" width="17.4" height="15.6" rx="1"/><path d="M1.2 4.8 H18.6" stroke-width="1.6"/></svg>
</div>
</div>
</body>
</html>
